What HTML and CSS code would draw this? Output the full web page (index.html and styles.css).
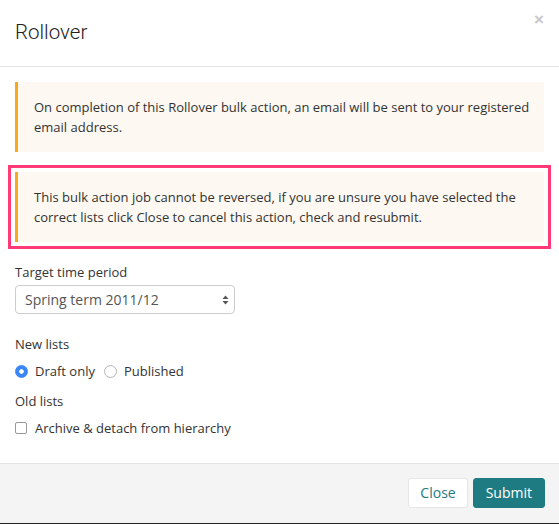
FILE: index.html
```html
<!DOCTYPE html>
<html lang="en">
<head>
    <meta charset="UTF-8">
    <meta name="viewport" content="width=device-width, initial-scale=1.0">
    <title>Rollover</title>
    <link rel="stylesheet" href="styles.css">
</head>
<body>
    <div class="modal">
        <header class="modal-header">
            <h1 class="modal-title">Rollover</h1>
            <button class="close-x" type="button">&times;</button>
        </header>

        <div class="modal-body">
            <div class="alert">
                On completion of this Rollover bulk action, an email will be sent to your registered email address.
            </div>

            <div class="alert alert-highlight">
                This bulk action job cannot be reversed, if you are unsure you have selected the correct lists click Close to cancel this action, check and resubmit.
            </div>

            <div class="form-group">
                <label class="control-label">Target time period</label>
                <div class="select-box">
                    <span>Spring term 2011/12</span>
                    <svg width="7" height="12" viewBox="0 0 7 12">
                        <path d="M3.5 1.5 L6.5 5 L0.5 5 Z" fill="#555"/>
                        <path d="M3.5 10.5 L6.5 7 L0.5 7 Z" fill="#555"/>
                    </svg>
                </div>
            </div>

            <div class="form-group tight">
                <label class="control-label">New lists</label>
                <div class="choice-row">
                    <label class="choice"><span class="radio checked"></span>Draft only</label>
                    <label class="choice"><span class="radio"></span>Published</label>
                </div>
            </div>

            <div class="form-group last">
                <label class="control-label">Old lists</label>
                <div class="choice-row">
                    <label class="choice"><span class="checkbox"></span>Archive &amp; detach from hierarchy</label>
                </div>
            </div>
        </div>

        <footer class="modal-footer">
            <button class="btn btn-default" type="button">Close</button>
            <button class="btn btn-primary" type="button">Submit</button>
        </footer>
    </div>
</body>
</html>
```

FILE: styles.css
```css
* {
    box-sizing: border-box;
}

html, body {
    margin: 0;
    padding: 0;
    background: #222;
}

body {
    font-family: "Open Sans", "Liberation Sans", sans-serif;
    font-size: 13px;
    line-height: 20px;
    color: #333;
}

.modal {
    width: 559px;
    height: 523px;
    background: #fff;
    display: flex;
    flex-direction: column;
}

.modal-header {
    position: relative;
    height: 67px;
    padding: 14px 15px;
    border-bottom: 1px solid #e5e5e5;
}

.modal-title {
    margin: 0;
    font-family: Roboto, "Open Sans", sans-serif;
    font-weight: 300;
    font-size: 20.5px;
    line-height: 36px;
    color: #222;
}

.close-x {
    position: absolute;
    top: 10px;
    right: 15px;
    padding: 0;
    border: none;
    background: none;
    font-family: "Liberation Sans", sans-serif;
    font-size: 17px;
    font-weight: bold;
    color: #c8c8c8;
    cursor: pointer;
}

.modal-body {
    flex: 1;
    padding: 15px;
}

.alert {
    padding: 15px 6px 15px 16px;
    margin-bottom: 20px;
    background: #fdf8f1;
    border-left: 3px solid #f7a81b;
}

.alert-highlight {
    outline: 3px solid #ff3a76;
    outline-offset: 4px;
}

.form-group {
    margin-bottom: 20px;
}

.form-group.tight {
    margin-bottom: 10px;
}

.form-group.last {
    margin-bottom: 0;
}

.control-label {
    display: block;
    margin-bottom: 3px;
}

.select-box {
    width: 220px;
    height: 29px;
    padding: 0 5px 0 9px;
    border: 1px solid #ccc;
    border-radius: 4px;
    display: flex;
    align-items: center;
    justify-content: space-between;
    font-size: 14px;
    color: #555;
}

.choice-row {
    display: flex;
    gap: 9px;
    margin-top: 7px;
}

.choice {
    display: flex;
    align-items: center;
    gap: 7px;
}

.radio {
    width: 13px;
    height: 13px;
    border-radius: 50%;
    border: 1px solid #b5b5b5;
    background: #fff;
}

.radio.checked {
    border-color: #3b86f5;
    background: radial-gradient(circle, #fff 0 2px, #3b86f5 2.5px);
}

.checkbox {
    width: 12px;
    height: 12px;
    border-radius: 2px;
    border: 1px solid #9a9a9a;
    background: #fff;
    margin-right: 1px;
}

.modal-footer {
    display: flex;
    justify-content: flex-end;
    gap: 5px;
    padding: 14px 14px 15px 15px;
    background: #f4f4f4;
    border-top: 1px solid #e3e3e3;
}

.btn {
    font-family: "Open Sans", "Liberation Sans", sans-serif;
    font-size: 14px;
    line-height: 20px;
    padding: 4px 12px;
    border-radius: 3px;
    cursor: pointer;
}

.btn-default {
    background: #fff;
    border: 1px solid #e6e6e6;
    color: #1f7b82;
    padding: 4px 11px;
}

.btn-primary {
    background: #1f7b82;
    border: 1px solid #1f7b82;
    color: #fff;
}
```
